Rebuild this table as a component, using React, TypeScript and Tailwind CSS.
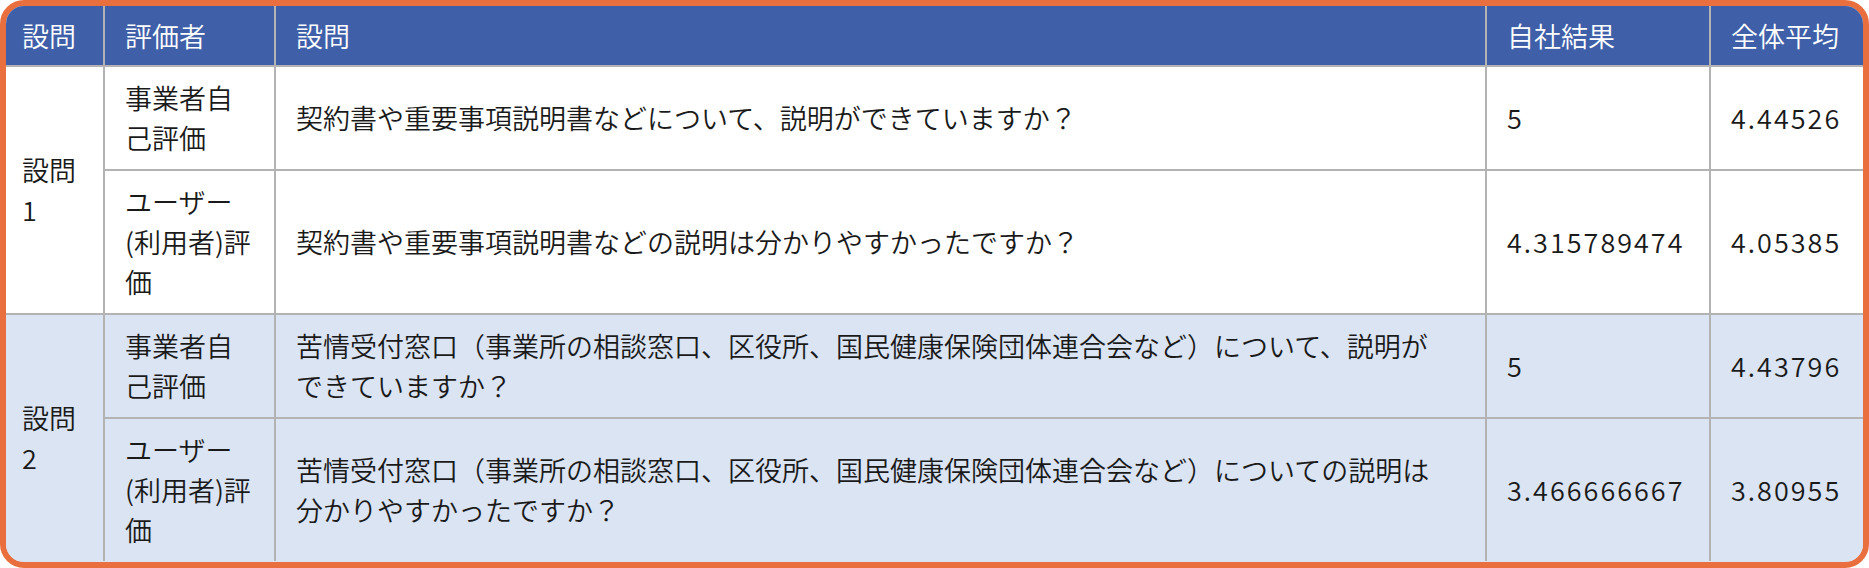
const cjk = { fontFamily: '"Noto Sans CJK JP", "Noto Sans", sans-serif' }

type Row = {
  group?: string[]
  span?: number
  light: boolean
  who: string[]
  q: string[]
  own: string
  avg: string
}

const rows: Row[] = [
  {
    group: ["設問", "1"],
    span: 2,
    light: false,
    who: ["事業者自", "己評価"],
    q: ["契約書や重要事項説明書などについて、説明ができていますか？"],
    own: "5",
    avg: "4.44526",
  },
  {
    light: false,
    who: ["ユーザー", "(利用者)評", "価"],
    q: ["契約書や重要事項説明書などの説明は分かりやすかったですか？"],
    own: "4.315789474",
    avg: "4.05385",
  },
  {
    group: ["設問", "2"],
    span: 2,
    light: true,
    who: ["事業者自", "己評価"],
    q: ["苦情受付窓口（事業所の相談窓口、区役所、国民健康保険団体連合会など）について、説明が", "できていますか？"],
    own: "5",
    avg: "4.43796",
  },
  {
    light: true,
    who: ["ユーザー", "(利用者)評", "価"],
    q: ["苦情受付窓口（事業所の相談窓口、区役所、国民健康保険団体連合会など）についての説明は", "分かりやすかったですか？"],
    own: "3.466666667",
    avg: "3.80955",
  },
]

function Lines({ items }: { items: string[] }) {
  return (
    <>
      {items.map((t, i) => (
        <span key={i} className="block">
          {t}
        </span>
      ))}
    </>
  )
}

export default function App() {
  const th = "border-l-2 border-[#b3b3b3] px-[20px] py-[9.5px] text-left font-[350] align-middle"
  const td = "border-l-2 border-t-2 border-[#b3b3b3] px-[20px] py-[11px] align-middle whitespace-nowrap"

  return (
    <div className="h-[568px] w-[1869px] overflow-hidden rounded-[24px] border-[6px] border-[#e9703e] bg-[#dae4f3]">
      <table
        className="w-full table-fixed border-separate border-spacing-0 text-[27px] font-[350] leading-[40px] text-[#1a1a1a]"
        style={cjk}
      >
        <colgroup>
          <col className="w-[97px]" />
          <col className="w-[171px]" />
          <col className="w-[1211px]" />
          <col className="w-[224px]" />
          <col className="w-[154px]" />
        </colgroup>
        <thead>
          <tr className="bg-[#3f5fa9] text-white">
            <th className="px-[16px] py-[9.5px] text-left font-[350] align-middle">設問</th>
            <th className={th}>評価者</th>
            <th className={th}>設問</th>
            <th className={th}>自社結果</th>
            <th className={th}>全体平均</th>
          </tr>
        </thead>
        <tbody>
          {rows.map((r, i) => (
            <tr key={i} className={r.light ? "bg-[#dae4f3]" : "bg-white"}>
              {r.group && (
                <td
                  rowSpan={r.span}
                  className="border-t-2 border-[#b3b3b3] px-[16px] py-[11px] align-middle whitespace-nowrap"
                >
                  <Lines items={r.group} />
                </td>
              )}
              <td className={td}>
                <Lines items={r.who} />
              </td>
              <td className={td}>
                <Lines items={r.q} />
              </td>
              <td className={td + " tracking-[2px]"}>{r.own}</td>
              <td className={td + " tracking-[2px]"}>{r.avg}</td>
            </tr>
          ))}
        </tbody>
      </table>
    </div>
  )
}
